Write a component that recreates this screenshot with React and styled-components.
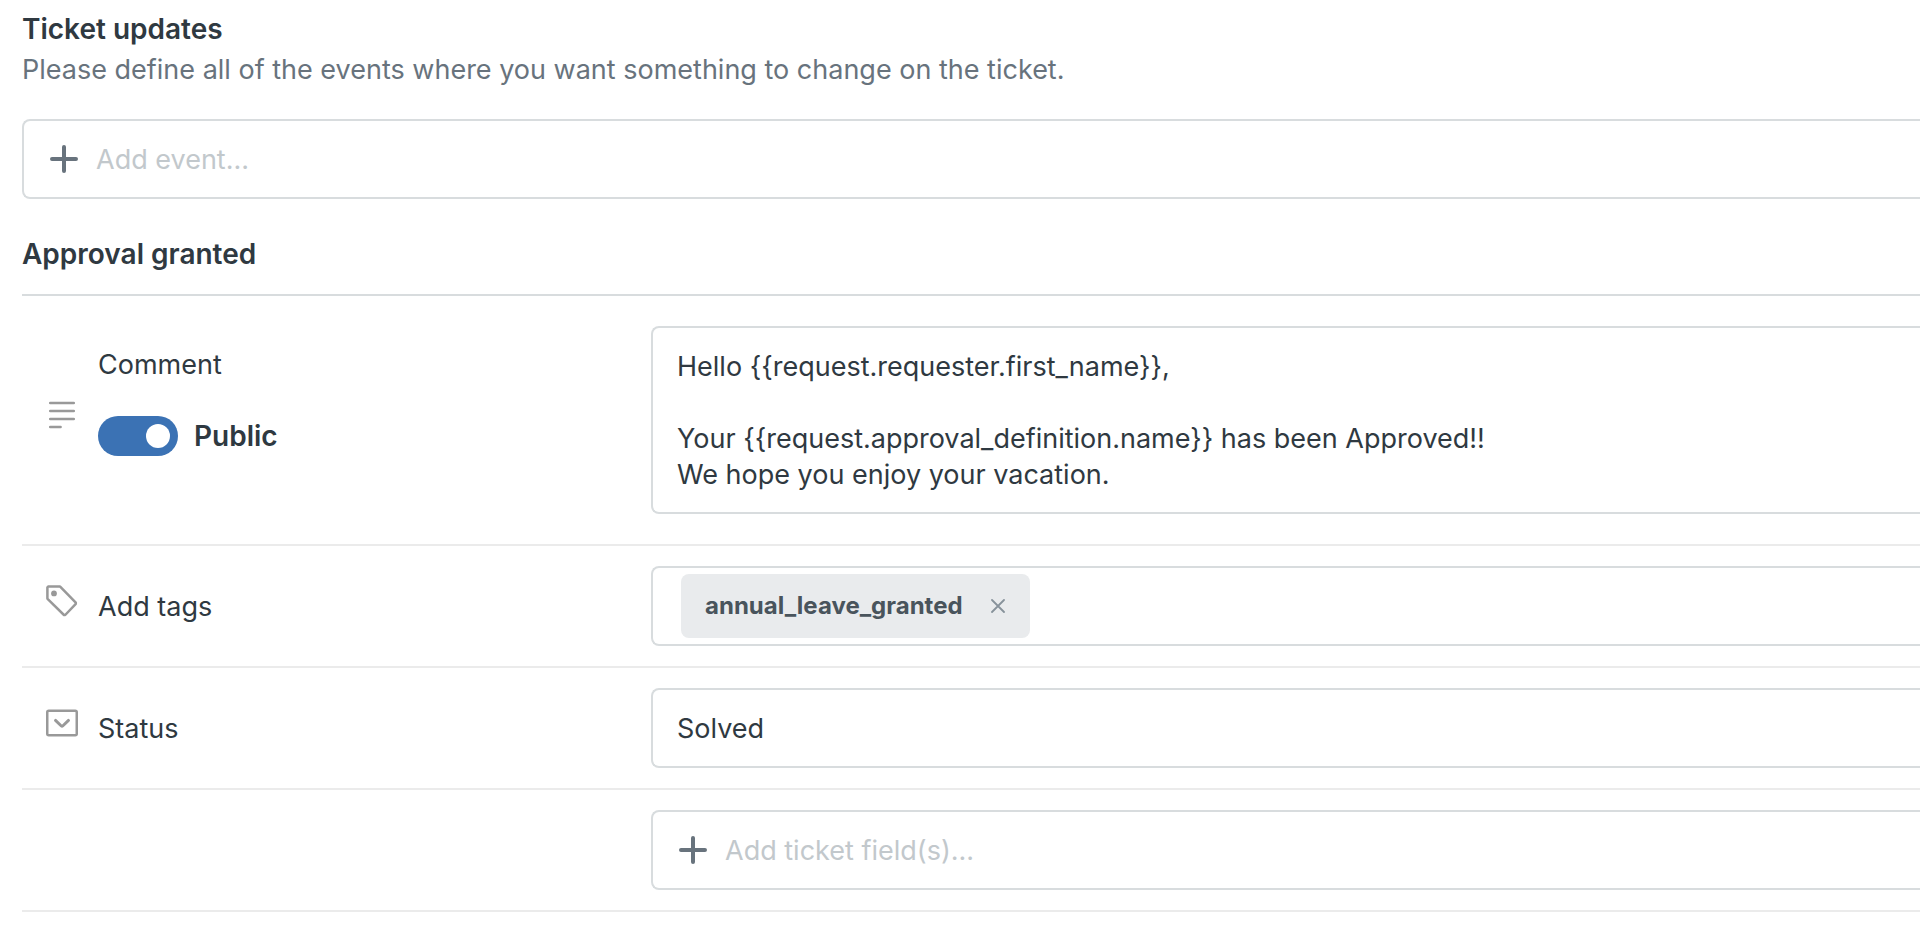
import React, { useState } from 'react';
import styled, { createGlobalStyle, css } from 'styled-components';

const message = `Hello {{request.requester.first_name}},

Your {{request.approval_definition.name}} has been Approved!!
We hope you enjoy your vacation.`;

const PlusIcon = () => (
  <svg width="28" height="28" viewBox="0 0 28 28" fill="none" stroke="#68737d" strokeWidth="4" strokeLinecap="round" aria-hidden="true">
    <path d="M14 2v24M2 14h24" />
  </svg>
);

const TextIcon = () => (
  <svg width="32" height="32" viewBox="0 0 32 32" fill="none" stroke="#999" strokeWidth="2.5" strokeLinecap="round" aria-hidden="true">
    <path d="M4.2 4h23.6M4.2 12h23.6M4.2 20h23.6M4.2 28h10.4" />
  </svg>
);

const TagIcon = () => (
  <svg width="32" height="32" viewBox="0 0 32 32" fill="none" stroke="#999" strokeWidth="2.5" strokeLinejoin="round" aria-hidden="true">
    <path d="M2.4 1.4h11.2l.8.4L29.8 17.6v1.2L19.2 30h-1.2L1.8 14.2l-.4-.8V2.4z" />
    <circle cx="8" cy="8.4" r="2.9" fill="#999" stroke="none" />
  </svg>
);

const DropdownIcon = () => (
  <svg width="32" height="28" viewBox="0 0 32 28" fill="none" stroke="#999" strokeWidth="2.5" aria-hidden="true">
    <rect x="1.25" y="1.75" width="29.5" height="24.5" rx="1.5" />
    <path d="M9.5 11.4l5.8 5.6q.7.6 1.4 0l5.8-5.6" strokeWidth="2.9" strokeLinecap="round" />
  </svg>
);

const CloseIcon = () => (
  <svg width="14" height="14" viewBox="0 0 14 14" fill="none" stroke="#87929b" strokeWidth="1.8" strokeLinecap="round" aria-hidden="true">
    <path d="M1 1l12 12M13 1L1 13" />
  </svg>
);

const App = () => {
  const [isPublic, setIsPublic] = useState(true);
  const [comment, setComment] = useState(message);
  const [tags, setTags] = useState(['annual_leave_granted']);

  return (
    <Page>
      <GlobalStyle />
      <Title>Ticket updates</Title>
      <Description>
        Please define all of the events where you want something to change on the ticket.
      </Description>
      <AddBox>
        <PlusIcon />
        <AddInput aria-label="Add event" placeholder="Add event..." />
      </AddBox>

      <SectionTitle>Approval granted</SectionTitle>
      <Row $tall>
        <IconCell>
          <TextIcon />
        </IconCell>
        <CommentCell>
          <Label htmlFor="comment">Comment</Label>
          <ToggleLabel>
            <Toggle type="checkbox" checked={isPublic} onChange={() => setIsPublic(!isPublic)} />
            Public
          </ToggleLabel>
        </CommentCell>
        <CommentInput id="comment" rows={4} value={comment} onChange={(e) => setComment(e.target.value)} />
      </Row>
      <Row>
        <IconCell>
          <TagIcon />
        </IconCell>
        <Label as="span">Add tags</Label>
        <TagBox>
          {tags.map((tag) => (
            <Tag key={tag}>
              {tag}
              <RemoveButton
                type="button"
                aria-label={`Remove ${tag}`}
                onClick={() => setTags(tags.filter((t) => t !== tag))}
              >
                <CloseIcon />
              </RemoveButton>
            </Tag>
          ))}
        </TagBox>
      </Row>
      <Row>
        <IconCell>
          <DropdownIcon />
        </IconCell>
        <Label htmlFor="status">Status</Label>
        <StatusSelect id="status" defaultValue="Solved">
          <option>Solved</option>
        </StatusSelect>
      </Row>
      <Row>
        <AddFieldBox>
          <PlusIcon />
          <AddInput aria-label="Add ticket fields" placeholder="Add ticket field(s)..." />
        </AddFieldBox>
      </Row>
    </Page>
  );
};

export default App;

const GlobalStyle = createGlobalStyle`
  * {
    box-sizing: border-box;
  }

  body {
    margin: 0;
    background-color: #fff;
    color: #2f3941;
    font-family: Inter, 'Liberation Sans', sans-serif;
    font-size: 27px;
    line-height: 40px;
  }

  input, select, textarea, button {
    margin: 0;
    font: inherit;
    color: inherit;
  }
`;

const Page = styled.main`
  padding: 9px 0 16px 22px;
`;

const Title = styled.h1`
  margin: 0;
  font-size: 28px;
  font-weight: 600;
`;

const Description = styled.p`
  margin: 0;
  padding: 1px 0 29px;
  color: #68737d;
`;

const SectionTitle = styled.h2`
  margin: 35px 0 0;
  padding-bottom: 20px;
  border-bottom: 2px solid #d8dcde;
  font-size: 28px;
  font-weight: 600;
`;

/* boxes run into the right edge of the pane, so they stay open there */
const box = css`
  width: 100%;
  min-height: 80px;
  border: 2px solid #d8dcde;
  border-right: none;
  border-radius: 8px 0 0 8px;
  background-color: #fff;
`;

const AddBox = styled.div`
  ${box}
  display: flex;
  align-items: center;
  gap: 18px;
  padding: 0 26px;
`;

const AddFieldBox = styled(AddBox)`
  grid-column: 3;
`;

const AddInput = styled.input`
  flex: 1;
  min-width: 0;
  height: 42px;
  padding: 1px 0 0;
  border: none;
  outline: none;
  background: none;

  &::placeholder {
    color: #c2c8cc;
    opacity: 1;
  }
`;

const Row = styled.div`
  display: grid;
  grid-template-columns: 76px 553px minmax(0, 1fr);
  align-items: center;
  padding: ${({ $tall }) => ($tall ? '30px 0' : '20px 0')};
  border-bottom: 2px solid #ebebeb;
`;

const IconCell = styled.div`
  display: flex;
  padding: 0 0 10px 24px;
`;

const CommentCell = styled.div`
  display: flex;
  flex-direction: column;
  align-self: start;
  align-items: flex-start;
  gap: 31px;
  padding-top: 17px;
`;

const Label = styled.label`
  display: block;
  padding-top: 2px;
`;

const ToggleLabel = styled.label`
  display: flex;
  align-items: center;
  gap: 16px;
  font-size: 28px;
  font-weight: 600;
`;

const Toggle = styled.input`
  appearance: none;
  display: flex;
  justify-content: flex-start;
  width: 80px;
  height: 40px;
  padding: 8px;
  border-radius: 20px;
  background-color: #87929b;
  cursor: pointer;

  &::before {
    content: '';
    width: 24px;
    height: 24px;
    border-radius: 50%;
    background-color: #fff;
  }

  &:checked {
    justify-content: flex-end;
    background-color: #3b72b4;
  }
`;

const CommentInput = styled.textarea`
  ${box}
  display: block;
  padding: 21px 24px 19px;
  line-height: 36px;
  outline: none;
  resize: none;
`;

const TagBox = styled.div`
  ${box}
  display: flex;
  align-items: center;
  padding: 0 28px;
`;

const Tag = styled.span`
  display: flex;
  align-items: center;
  gap: 17px;
  height: 64px;
  padding: 0 14px 0 24px;
  border-radius: 8px;
  background-color: #e9ebed;
  color: #49545c;
  font-size: 24px;
  font-weight: 700;
`;

const RemoveButton = styled.button`
  display: flex;
  align-items: center;
  justify-content: center;
  width: 36px;
  height: 36px;
  padding: 0;
  border: none;
  background: none;
  cursor: pointer;
`;

const StatusSelect = styled.select`
  ${box}
  appearance: none;
  padding: 2px 24px 0;
  outline: none;
`;
